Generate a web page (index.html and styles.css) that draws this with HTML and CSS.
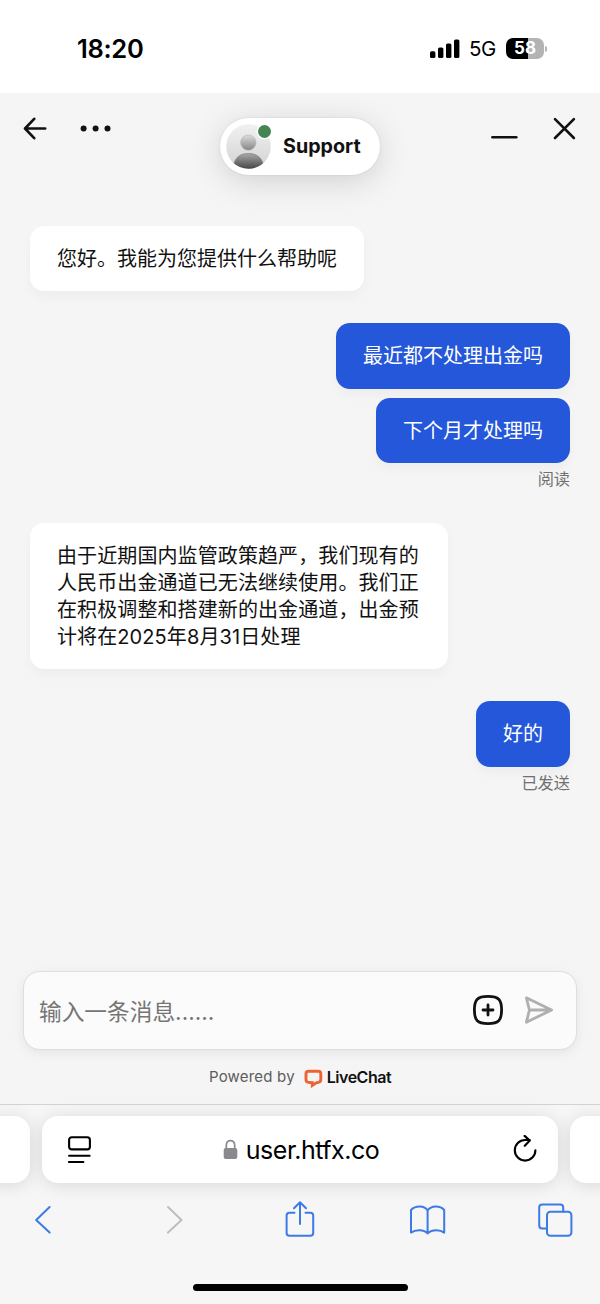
FILE: index.html
```html
<!DOCTYPE html>
<html lang="zh-CN">
<head>
    <meta charset="UTF-8">
    <meta name="viewport" content="width=device-width, initial-scale=1.0">
    <title>Support</title>
    <link rel="stylesheet" href="styles.css">
</head>
<body>

<div class="status-bar">
    <span class="time">18:20</span>
    <div class="status-icons">
        <svg class="signal" width="30" height="20" viewBox="0 0 30 20">
            <rect x="0" y="12.3" width="5.4" height="6.7" rx="1.6"/>
            <rect x="8" y="8.5" width="5.4" height="10.5" rx="1.6"/>
            <rect x="16" y="4.5" width="5.4" height="14.5" rx="1.6"/>
            <rect x="24" y="0.4" width="5.4" height="18.6" rx="1.6"/>
        </svg>
        <span class="network">5G</span>
        <div class="battery">58</div>
        <span class="battery-tip"></span>
    </div>
</div>

<div class="chat">
    <div class="chat-header">
        <div class="header-left">
            <svg width="24" height="24" viewBox="0 0 24 24" class="icon">
                <path d="M22.2 11.5H2.4M11.2 1.8L2 11.5L11.2 21.2"/>
            </svg>
            <svg width="32" height="24" viewBox="0 0 32 24">
                <circle cx="3.6" cy="11.5" r="3" fill="#111"/>
                <circle cx="15.6" cy="11.5" r="3" fill="#111"/>
                <circle cx="27.5" cy="11.5" r="3" fill="#111"/>
            </svg>
        </div>
        <div class="agent">
            <div class="avatar">
                <svg width="45" height="45" viewBox="0 0 45 45">
                    <defs>
                        <linearGradient id="bg" x1="0" y1="0" x2="0" y2="1">
                            <stop offset="0" stop-color="#f1f1f1"/>
                            <stop offset="1" stop-color="#d2d2d2"/>
                        </linearGradient>
                        <linearGradient id="head" x1="0" y1="0" x2="0" y2="1">
                            <stop offset="0" stop-color="#dcdcdc"/>
                            <stop offset="1" stop-color="#858585"/>
                        </linearGradient>
                        <linearGradient id="body" x1="0" y1="0" x2="0" y2="1">
                            <stop offset="0" stop-color="#a9a9a9"/>
                            <stop offset="1" stop-color="#3d3d3d"/>
                        </linearGradient>
                        <clipPath id="round"><circle cx="22.5" cy="22.5" r="22.3"/></clipPath>
                    </defs>
                    <g clip-path="url(#round)">
                        <rect width="45" height="45" fill="url(#bg)"/>
                        <circle cx="22.3" cy="18.6" r="7.7" fill="url(#head)" stroke="#b5b5b5" stroke-width=".6"/>
                        <path d="M7.5 40.5C10 32.5 15 29.5 22.3 29.5S35 32.5 37.5 40.5V46H7.5Z" fill="url(#body)" stroke="#858585" stroke-width=".8"/>
                    </g>
                </svg>
                <span class="online"></span>
            </div>
            <span class="agent-name">Support</span>
        </div>
        <div class="header-right">
            <svg width="28" height="24" viewBox="0 0 28 24" class="icon">
                <path d="M1.4 20.3H25.3"/>
            </svg>
            <svg width="24" height="24" viewBox="0 0 24 24" class="icon">
                <path d="M2 2.1L20.9 21M20.9 2.1L2 21"/>
            </svg>
        </div>
    </div>

    <div class="messages">
        <div class="message">您好。我能为您提供什么帮助呢</div>
        <div class="message own first">最近都不处理出金吗</div>
        <div class="message own">下个月才处理吗</div>
        <div class="status">阅读</div>
        <div class="message long">由于近期国内监管政策趋严，我们现有的人民币出金通道已无法继续使用。我们正在积极调整和搭建新的出金通道，出金预计将在2025年8月31日处理</div>
        <div class="message own first">好的</div>
        <div class="status">已发送</div>
    </div>

    <div class="composer">
        <span class="placeholder">输入一条消息......</span>
        <svg class="add" width="32" height="32" viewBox="0 0 32 32">
            <path d="M16 2.4C26.5 2.4 29.6 5.5 29.6 16S26.5 29.6 16 29.6S2.4 26.5 2.4 16S5.5 2.4 16 2.4Z"/>
            <path d="M16 11V21M11 16H21"/>
        </svg>
        <svg class="send" width="30" height="28" viewBox="0 0 30 28">
            <path d="M2.4 1.8L27.6 14L2.4 26.2L5.4 14ZM5.4 14H27"/>
        </svg>
    </div>

    <div class="powered">
        <span>Powered by</span>
        <svg width="19" height="19" viewBox="0 0 19 19">
            <path d="M4.6 2.2H14.2Q16.8 2.2 16.8 4.8V10.6Q16.8 13.2 14.4 13.4L12.2 13.8L8.3 16.4V13.7L4.4 13.4Q2 13.2 2 10.6V4.8Q2 2.2 4.6 2.2Z" fill="none" stroke="#eb6433" stroke-width="2.9"/>
        </svg>
        <b>LiveChat</b>
    </div>
</div>

<div class="browser">
    <div class="tabs">
        <div class="tab"></div>
        <div class="tab address">
            <svg class="reader" width="24" height="30" viewBox="0 0 24 30">
                <rect x="2.1" y="2.2" width="20.8" height="12.2" rx="2.6"/>
                <path d="M2.1 20.8H22.6M1.9 27H16.4"/>
            </svg>
            <div class="url">
                <svg width="15" height="21" viewBox="0 0 15 21">
                    <path d="M3.3 10V6.2C3.3 0 11.7 0 11.7 6.2V10" fill="none" stroke="#8a8a8e" stroke-width="1.7"/>
                    <rect x=".7" y="9" width="13.6" height="11" rx="2" fill="#8a8a8e"/>
                </svg>
                <span>user.htfx.co</span>
            </div>
            <svg class="reload" width="24" height="30" viewBox="0 0 24 30">
                <path d="M22.4 15.3A10.3 10.3 0 1 1 12.1 5H16.8M11.6 .9L16.8 5.6L11.8 10.8"/>
            </svg>
        </div>
        <div class="tab"></div>
    </div>
    <div class="toolbar">
        <svg width="18" height="38" viewBox="0 0 18 38">
            <path d="M14.6 7L1.2 20L14.6 32.6"/>
        </svg>
        <svg class="disabled" width="18" height="38" viewBox="0 0 18 38">
            <path d="M2 7L15.5 20L2 32.6"/>
        </svg>
        <svg width="30" height="38" viewBox="0 0 30 38">
            <path d="M9.5 12.8H4.4Q1.6 12.8 1.6 15.6V33Q1.6 35.8 4.4 35.8H25.4Q28.2 35.8 28.2 33V15.6Q28.2 12.8 25.4 12.8H20.5M15 24V2.3M9 8.2L15 2.2L21 8.2"/>
        </svg>
        <svg width="36" height="38" viewBox="0 0 36 38">
            <path d="M17.6 10.5C14.5 5.4 5.5 5.4 1 10V32.6C5.5 29.2 14 29.2 17.6 33.4C21.6 29.2 30 29.2 34.2 32.6V10C30 5.4 21.2 5.4 17.6 10.5V33.4"/>
        </svg>
        <svg width="36" height="38" viewBox="0 0 36 38">
            <path d="M8.6 28.6H4.2Q1.2 28.6 1.2 25.6V7.4Q1.2 4.4 4.2 4.4H22.2Q25.2 4.4 25.2 7.4V11.6"/>
            <rect x="9" y="11.8" width="24.4" height="24" rx="3.4"/>
        </svg>
    </div>
    <div class="home-indicator"></div>
</div>

</body>
</html>
```

FILE: styles.css
```css
* {
    box-sizing: border-box;
}
body {
    margin: 0;
    width: 600px;
    height: 1304px;
    overflow: hidden;
    display: flex;
    flex-direction: column;
    font-family: Inter, "Noto Sans CJK SC", sans-serif;
    background-color: #f5f5f5;
    color: #111;
}
svg {
    display: block;
    flex: none;
}

/* status bar */
.status-bar {
    height: 92.5px;
    padding: 5px 53px 0 77px;
    display: flex;
    justify-content: space-between;
    align-items: center;
    background: #fff;
    color: #000;
}
.time {
    font-size: 25.5px;
    font-weight: 600;
    letter-spacing: -0.3px;
}
.status-icons {
    display: flex;
    align-items: center;
}
.network {
    margin-left: 9px;
    width: 28px;
    font-size: 20.5px;
    letter-spacing: -0.4px;
}
.battery {
    margin-left: 9px;
    width: 38px;
    height: 21px;
    line-height: 21px;
    border-radius: 7px;
    background: linear-gradient(to right, #000 58%, #b3b3b3 58%);
    color: #fff;
    font-size: 17px;
    font-weight: 700;
    text-align: center;
}
.battery-tip {
    width: 2px;
    height: 6px;
    margin-left: 1px;
    border-radius: 0 3px 3px 0;
    background: #b3b3b3;
}

/* chat */
.chat {
    height: 1011.5px;
    display: flex;
    flex-direction: column;
}
.chat-header {
    height: 133.25px;
    padding: 24px 23px 0;
    display: flex;
    justify-content: space-between;
    align-items: flex-start;
}
.header-left, .header-right {
    display: flex;
    width: 130px;
}
.header-left {
    gap: 33px;
}
.header-right {
    justify-content: flex-end;
    gap: 34px;
}
.icon {
    fill: none;
    stroke: #111;
    stroke-width: 2.6;
    stroke-linecap: round;
    stroke-linejoin: round;
}
.agent {
    width: 160px;
    height: 57px;
    margin-top: 1px;
    padding-left: 6px;
    display: flex;
    align-items: center;
    background: #fff;
    border-radius: 29px;
    box-shadow: 0 0 2px rgba(0, 0, 0, 0.12), 0 6px 32px rgba(0, 0, 0, 0.15);
}
.avatar {
    position: relative;
}
.online {
    position: absolute;
    top: 1px;
    right: 0;
    width: 13px;
    height: 13px;
    border-radius: 50%;
    background: #458554;
    box-shadow: 0 0 0 1.5px #fff;
}
.agent-name {
    margin-left: 12px;
    font-size: 19.7px;
    font-weight: 700;
}
.messages {
    flex: 1;
    padding: 0 30px;
    display: flex;
    flex-direction: column;
    align-items: flex-start;
}
.message {
    padding: 20px 27px 18.5px;
    background: #fff;
    border-radius: 14px;
    box-shadow: 0 6px 12px rgba(0, 0, 0, 0.035);
    font-size: 20px;
    line-height: 27px;
}
.message.long {
    width: 418px;
    margin-top: 31.5px;
    padding-right: 25px;
    letter-spacing: 0.1px;
}
.message.own {
    align-self: flex-end;
    margin-top: 9px;
    background: #2457d9;
    color: #fff;
}
.message.own.first {
    margin-top: 32px;
}
.status {
    align-self: flex-end;
    margin-top: 4px;
    height: 24px;
    line-height: 24px;
    font-size: 16.2px;
    color: #707070;
}

/* message input */
.composer {
    height: 79px;
    margin: 0 23px;
    padding: 0 22px 0 15px;
    display: flex;
    align-items: center;
    background: #fbfbfb;
    border: 1px solid #dedede;
    border-radius: 17px;
    box-shadow: 0 3px 12px rgba(0, 0, 0, 0.07);
}
.placeholder {
    flex: 1;
    font-size: 22.7px;
    color: #757575;
}
.add, .send {
    fill: none;
    stroke: #111;
    stroke-width: 2.8;
    stroke-linecap: round;
    stroke-linejoin: round;
}
.send {
    margin-left: 20px;
    stroke: #b0b0b0;
}
.powered {
    height: 54.5px;
    display: flex;
    justify-content: center;
    align-items: center;
    font-size: 15px;
    letter-spacing: 0.2px;
    color: #5c5c5c;
}
.powered span {
    margin-top: -1px;
}
.powered svg {
    margin: 3px 4px 0 9px;
}
.powered b {
    font-size: 16px;
    font-weight: 600;
    letter-spacing: -0.5px;
    color: #111;
}

/* browser bottom bar */
.browser {
    height: 200px;
    border-top: 1px solid #d3d3d3;
    background: #f6f6f6;
}
.tabs {
    display: grid;
    grid-template-columns: 45px 516px 45px;
    gap: 12px;
    margin: 11px -15px 0;
}
.tab {
    height: 67px;
    border-radius: 16px;
    background: #fff;
    box-shadow: 0 2px 18px rgba(0, 0, 0, 0.12);
}
.address {
    padding: 0 21px 0 25px;
    display: flex;
    justify-content: space-between;
    align-items: center;
}
.reader, .reload {
    fill: none;
    stroke: #000;
    stroke-width: 2.1;
    stroke-linecap: round;
    stroke-linejoin: round;
}
.url {
    display: flex;
    align-items: center;
    gap: 8px;
    margin-right: 2px;
    font-size: 25px;
    letter-spacing: -0.5px;
    color: #000;
}
.toolbar {
    margin: 17px -20px 0;
    display: grid;
    grid-template-columns: repeat(5, 128px);
    justify-items: center;
}
.toolbar svg {
    fill: none;
    stroke: #3c7ae6;
    stroke-width: 2;
    stroke-linecap: round;
    stroke-linejoin: round;
}
.toolbar .disabled {
    margin-left: 5px;
    stroke: #bdbdbd;
}
.home-indicator {
    width: 215px;
    height: 7px;
    margin: 46px auto 0;
    border-radius: 4px;
    background: #000;
}
```
